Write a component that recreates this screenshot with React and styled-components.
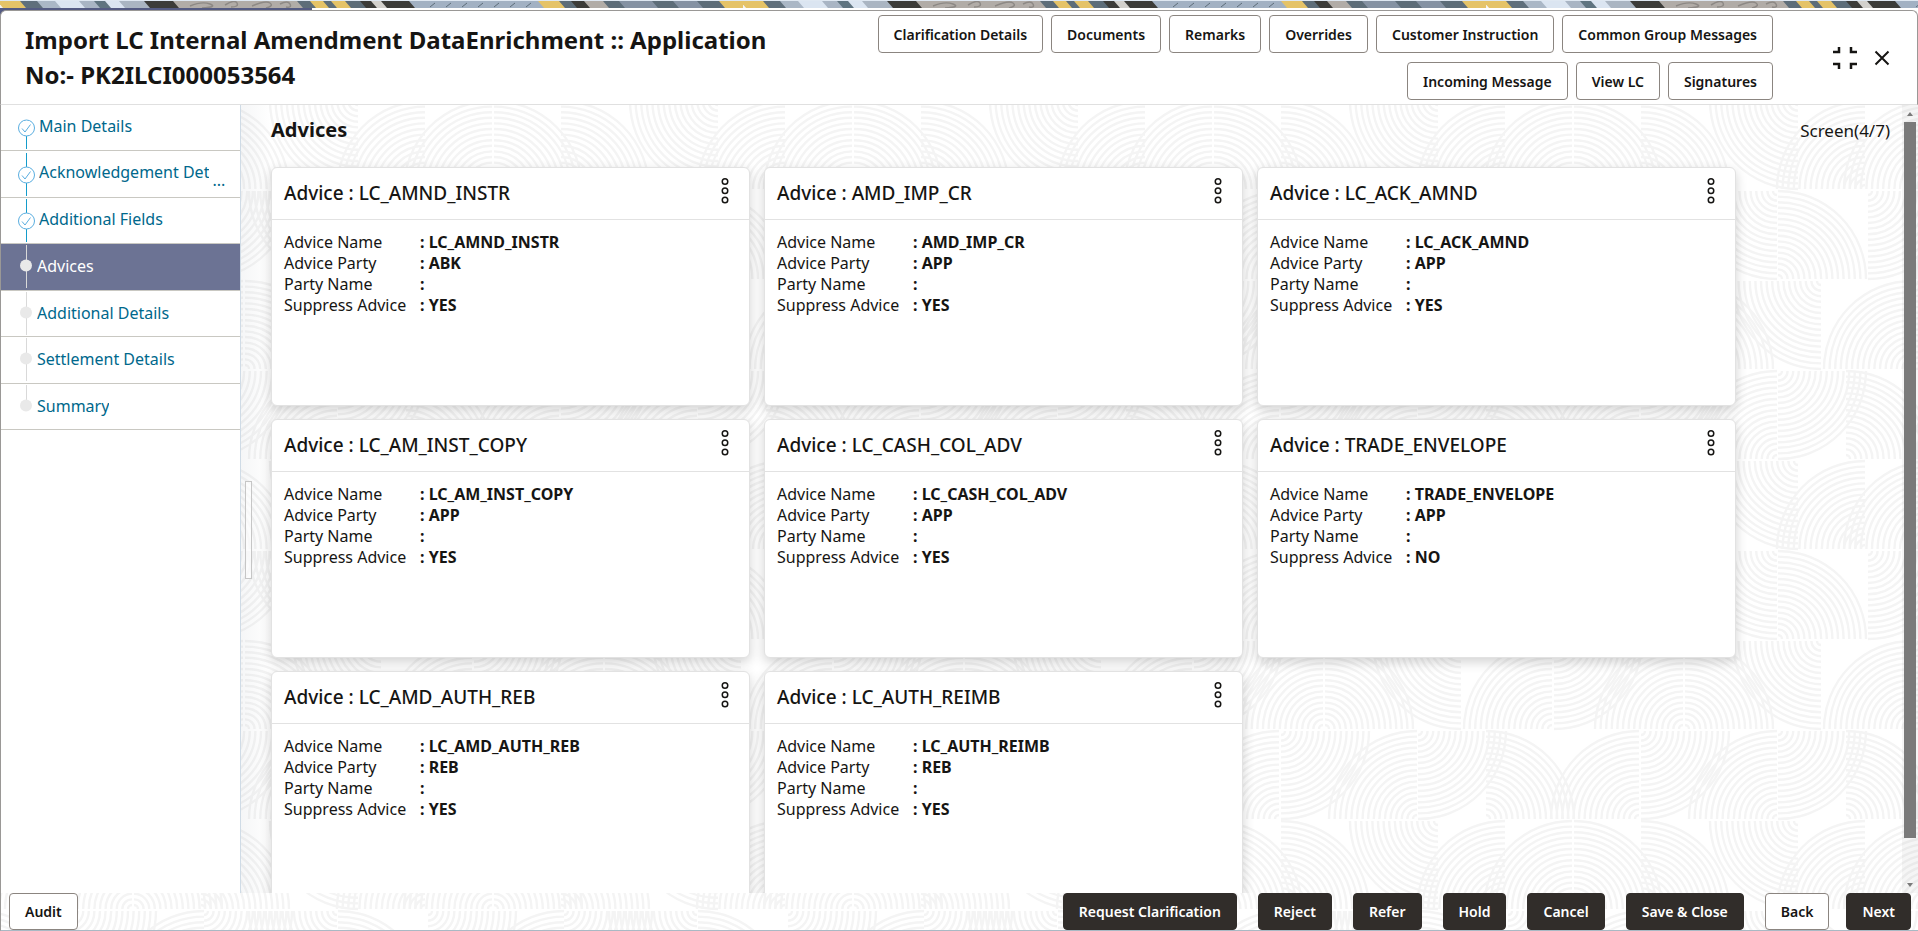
import React from 'react';
import styled, { createGlobalStyle, css } from 'styled-components';

// Vector backgrounds
const svgUrl = (svg) => `url("data:image/svg+xml,${encodeURIComponent(svg)}")`;

const TILE = 360;

// Quarter fans of the backdrop: centre x, centre y, horizontal and vertical direction
const fans = [
    [68, 191, 1, 1], [204, 279, -1, -1], [204, 191, 1, 1], [337, 191, -1, 1], [338, 279, 1, -1],
    [21, 281, -1, 1], [112, 369, -1, -1], [114, 281, 1, 1], [243, 369, -1, -1], [245, 369, 1, -1],
    [201, 11, 1, 1], [46, 99, 1, -1], [199, 99, -1, -1], [337, 99, -1, -1], [338, 11, 1, 1],
    [65, 189, -1, -1], [132, 189, -1, -1], [134, 189, 1, -1], [201, 189, 1, -1], [358, 101, -1, 1],
];

const fanPath = ([cx, cy, dx, dy]) => {
    let d = '';
    for (let i = 0; i < 16; i++) {
        const r = 4 + i * 5.6;
        const sweep = dx * dy > 0 ? 1 : 0;
        d += `M${cx + dx * r} ${cy}A${r} ${r} 0 0 ${sweep} ${cx} ${cy + dy * r}`;
    }
    return d;
};

const fanData = fans.map(fanPath).join('');

const backdrop = svgUrl(
    `<svg xmlns="http://www.w3.org/2000/svg" width="${TILE}" height="${TILE}" fill="none" stroke="#f4f4f4" stroke-width="2.400">` +
        [-TILE, 0, TILE]
            .map((x) => [-TILE, 0].map((y) => `<path transform="translate(${x} ${y})" d="${fanData}"/>`).join(''))
            .join('') +
        '</svg>'
);

// Colour patches of the banner strip: start x, colour
const patches = [
    [0, '#e5c368'], [23, '#5f6f7c'], [40, '#aab7c6'], [58, '#dbe5f1'], [82, '#a9b5c4'], [97, '#5f7480'],
    [108, '#dbe5f1'], [122, '#aab5c2'], [147, '#3c3c39'], [176, '#b1aca7'], [300, '#5d6d79'], [313, '#e5c368'],
    [326, '#5d6d79'], [334, '#e5c368'], [348, '#5d6d79'], [363, '#3c3c39'], [374, '#d3d1cd'], [384, '#3c3c39'],
    [412, '#a2b1c3'], [541, '#e5c368'], [562, '#5d6d79'], [574, '#3c3c39'], [587, '#b1aca7'], [606, '#5d6d79'],
    [622, '#8592a3'], [655, '#5d6d79'], [676, '#8592a3'], [700, '#5d6d79'], [722, '#e5c368'],
];

const banner = svgUrl(
    '<svg xmlns="http://www.w3.org/2000/svg" width="743" height="7">' +
        patches
            .map(([x, color], i) => {
                const end = i + 1 < patches.length ? patches[i + 1][0] : 743;
                return `<path fill="${color}" d="M${x - 3} 0H${end + 3}L${end + 9} 7H${x + 3}Z"/>`;
            })
            .join('') +
        '<path fill="none" stroke="#8d8985" stroke-width="1.500" d="M190 5q12-5 20-2t-8 4M225 4q10-6 12-2t-6 4M252 5q14-6 18-3t-4 5M280 3q8-4 10 0t-4 3"/>' +
        '<path stroke="#5d6d79" stroke-width="1" d="M430 6l5-4M446 6l5-4M462 6l5-4M478 6l5-4M494 6l5-4M510 6l5-4M526 6l5-4"/>' +
        '</svg>'
);

const GlobalStyle = createGlobalStyle`
    * {
        box-sizing: border-box;
    }

    body {
        margin: 0;
        color: #161513;
        font-family: 'Noto Sans', 'Open Sans', sans-serif;
        font-size: 16px;
        line-height: 21px;
        overflow: hidden;
    }
`;

// Page frame
const Page = styled.div`
    height: 100vh;
    display: flex;
    flex-direction: column;
    background: #fff ${backdrop};
`;

const Banner = styled.div`
    height: 8px;
    flex: none;
    border-top: 1px solid #dfe8f2;
    background: ${banner} repeat-x;
`;

const Dialog = styled.div`
    flex: 1;
    min-height: 0;
    display: flex;
    flex-direction: column;
    padding-top: 2px;
    background: linear-gradient(90deg, #545b83 312px, #fff 312px) 0 0 / 100% 8px no-repeat;
`;

const Header = styled.header`
    flex: none;
    min-height: 95px;
    display: flex;
    justify-content: space-between;
    padding: 4px 27px 4px 24px;
    background: #fff;
    border: 1px solid #9a9896;
    border-bottom-color: #e0e0e0;
    border-radius: 6px 6px 0 0;
`;

const Title = styled.h1`
    flex: 0 1 770px;
    margin: 0;
    padding-top: 7px;
    font-size: 24px;
    font-weight: 700;
    line-height: 35px;
`;

const HeaderSide = styled.div`
    display: flex;
    align-items: flex-start;
`;

const ActionList = styled.div`
    max-width: 940px;
    display: flex;
    flex-wrap: wrap;
    justify-content: flex-end;
    gap: 9px 8px;
    margin-right: 59px;
`;

const WindowTools = styled.div`
    display: flex;
    align-items: center;
    gap: 16px;
    padding-top: 31px;
`;

const Button = styled.button`
    height: ${({ $tall }) => ($tall ? 38 : 37)}px;
    padding: 0 15px;
    border: 1px solid ${({ $dark }) => ($dark ? '#312d2a' : '#8b8580')};
    border-radius: 4px;
    background: ${({ $dark }) => ($dark ? '#312d2a' : '#fff')};
    color: ${({ $dark }) => ($dark ? '#fff' : '#161513')};
    font-family: inherit;
    font-size: 14px;
    font-weight: 600;
    white-space: nowrap;
    cursor: pointer;
`;

const IconButton = styled.button`
    display: flex;
    padding: 0;
    border: 0;
    background: none;
    color: #161513;
    cursor: pointer;
`;

// Middle part: steps on the left, cards on the right
const Main = styled.div`
    flex: 1;
    min-height: 0;
    display: flex;
`;

const Sidebar = styled.nav`
    flex: none;
    width: 241px;
    background: #fff;
    border-left: 1px solid #9a9896;
    border-right: 1px solid #cfdbe6;
`;

const StepList = styled.ol`
    height: 325px;
    display: flex;
    flex-direction: column;
    margin: 0;
    padding: 0;
    list-style: none;
`;

const Step = styled.li`
    flex: 1;
    min-height: 0;
    border-bottom: 1px solid #c9c8c2;
    background: ${({ $active }) => ($active ? '#6c7394' : '#fff')};
`;

const StepLink = styled.a`
    height: 100%;
    display: flex;
    align-items: center;
    gap: ${({ $done }) => ($done ? 3 : 1)}px;
    padding-left: 15px;
    color: ${({ $active }) => ($active ? '#fff' : '#00688c')};
    text-decoration: none;
`;

const StepLabel = styled.span`
    max-width: 173px;
    overflow: hidden;
    white-space: nowrap;
    ${({ $done }) =>
        $done &&
        css`
            padding-bottom: 3px;
        `}
`;

const Ellipsis = styled.span`
    align-self: flex-end;
    padding-bottom: 6px;
`;

const Divider = styled.div`
    flex: none;
    width: 30px;
    padding: 376px 0 0 4px;
    background: linear-gradient(90deg, rgba(90, 105, 120, 0.06), rgba(90, 105, 120, 0));
`;

const Handle = styled.div`
    width: 7px;
    height: 98px;
    border: 1px solid #c6c6c6;
    background: rgba(255, 255, 255, 0.6);
`;

const Content = styled.main`
    flex: 1;
    min-width: 0;
    overflow: hidden;
    margin-left: -30px;
    padding: 10px 12px 0 30px;
`;

const ContentHead = styled.div`
    display: flex;
    justify-content: space-between;
    align-items: baseline;
    margin-bottom: 21px;
    line-height: 30px;
`;

const Heading = styled.h2`
    margin: 0;
    font-size: 20px;
    font-weight: 700;
`;

const ScreenCount = styled.span`
    font-size: 17px;
`;

const CardGrid = styled.div`
    max-width: 1465px;
    display: grid;
    grid-template-columns: repeat(3, 1fr);
    gap: 13px 14px;
`;

const Card = styled.section`
    height: 239px;
    background: #fff;
    border: 1px solid #e2e2e2;
    border-radius: 6px;
    box-shadow: 0 4px 12px rgba(0, 0, 0, 0.18);
`;

const CardHead = styled.div`
    height: 52px;
    display: flex;
    justify-content: space-between;
    align-items: flex-start;
    padding: 10px 20px 0 12px;
    border-bottom: 1px solid #e2e2e2;
`;

const CardTitle = styled.h3`
    margin: 0;
    font-size: 19px;
    font-weight: 500;
    line-height: 30px;
`;

const Fields = styled.dl`
    display: grid;
    grid-template-columns: 136px 1fr;
    margin: 0;
    padding: 12px;
`;

const FieldName = styled.dt``;

const FieldValue = styled.dd`
    margin: 0;
    font-weight: 700;
`;

// Scroll bar beside the cards
const Track = styled.div`
    flex: none;
    width: 16px;
    display: flex;
    flex-direction: column;
    align-items: center;
    background: rgba(0, 0, 0, 0.04);
`;

const Arrow = styled.svg`
    flex: none;
    width: 16px;
    height: 17px;
    fill: #7a7a7a;
`;

const ThumbArea = styled.div`
    flex: 1;
    width: 12px;
`;

const Thumb = styled.div`
    height: 95%;
    background: #7a7a7a;
`;

const Footer = styled.footer`
    flex: none;
    display: flex;
    justify-content: space-between;
    padding: 0 7px 0 8px;
    border-left: 1px solid #9a9896;
    border-bottom: 1px solid #a9b9c4;
`;

const FooterGroup = styled.div`
    display: flex;
    gap: ${({ $gap }) => $gap}px;
`;

const actions = [
    'Clarification Details',
    'Documents',
    'Remarks',
    'Overrides',
    'Customer Instruction',
    'Common Group Messages',
    'Incoming Message',
    'View LC',
    'Signatures',
];

const steps = [
    { label: 'Main Details', done: true },
    { label: 'Acknowledgement Details', done: true, cut: true },
    { label: 'Additional Fields', done: true },
    { label: 'Advices', active: true },
    { label: 'Additional Details' },
    { label: 'Settlement Details' },
    { label: 'Summary' },
];

const advices = [
    { name: 'LC_AMND_INSTR', party: 'ABK', suppress: 'YES' },
    { name: 'AMD_IMP_CR', party: 'APP', suppress: 'YES' },
    { name: 'LC_ACK_AMND', party: 'APP', suppress: 'YES' },
    { name: 'LC_AM_INST_COPY', party: 'APP', suppress: 'YES' },
    { name: 'LC_CASH_COL_ADV', party: 'APP', suppress: 'YES' },
    { name: 'TRADE_ENVELOPE', party: 'APP', suppress: 'NO' },
    { name: 'LC_AMD_AUTH_REB', party: 'REB', suppress: 'YES' },
    { name: 'LC_AUTH_REIMB', party: 'REB', suppress: 'YES' },
];

const footerActions = ['Request Clarification', 'Reject', 'Refer', 'Hold', 'Cancel', 'Save & Close'];

function StepMarker({ done, first, last }) {
    const lineTop = first ? 23 : 1;
    const lineBottom = last ? 22 : 44;
    if (done) {
        return (
            <svg width="20" height="45" viewBox="0 0 20 45" fill="none" aria-hidden="true">
                <path d={`M10.5 ${lineTop}V${lineBottom}`} stroke="#149ccb" />
                <circle cx="10.5" cy="23" r="8" fill="#fff" stroke="#5aaee0" />
                <path d="M6 23.5l3 3.5 5.500-7.500" stroke="#5aaee0" />
            </svg>
        );
    }
    return (
        <svg width="20" height="45" viewBox="0 0 20 45" fill="none" aria-hidden="true">
            <path d={`M10.5 ${lineTop}V${lineBottom}`} stroke="#d9d9d9" />
            <circle cx="10" cy="21.500" r="6" fill="#e9e9e9" />
        </svg>
    );
}

function AdviceCard({ advice }) {
    return (
        <Card>
            <CardHead>
                <CardTitle>Advice : {advice.name}</CardTitle>
                <IconButton aria-label="Card menu">
                    <svg width="8" height="26" viewBox="0 0 8 26" fill="none" stroke="currentColor" strokeWidth="1.500">
                        <circle cx="4" cy="3.500" r="2.750" />
                        <circle cx="4" cy="12.750" r="2.750" />
                        <circle cx="4" cy="22" r="2.750" />
                    </svg>
                </IconButton>
            </CardHead>
            <Fields>
                <FieldName>Advice Name</FieldName>
                <FieldValue>: {advice.name}</FieldValue>
                <FieldName>Advice Party</FieldName>
                <FieldValue>: {advice.party}</FieldValue>
                <FieldName>Party Name</FieldName>
                <FieldValue>:</FieldValue>
                <FieldName>Suppress Advice</FieldName>
                <FieldValue>: {advice.suppress}</FieldValue>
            </Fields>
        </Card>
    );
}

function App() {
    return (
        <Page>
            <GlobalStyle />
            <Banner />
            <Dialog>
                <Header>
                    <Title>Import LC Internal Amendment DataEnrichment :: Application No:- PK2ILCI000053564</Title>
                    <HeaderSide>
                        <ActionList>
                            {actions.map((action) => (
                                <Button key={action} $tall>{action}</Button>
                            ))}
                        </ActionList>
                        <WindowTools>
                            <IconButton aria-label="Collapse">
                                <svg width="26" height="24" viewBox="0 0 26 24" fill="none" stroke="currentColor" strokeWidth="2.500">
                                    <path d="M1 6h6V1M25 6h-6V1M1 18h6v5M25 18h-6v5" />
                                </svg>
                            </IconButton>
                            <IconButton aria-label="Close">
                                <svg width="16" height="16" viewBox="0 0 16 16" fill="none" stroke="currentColor" strokeWidth="2">
                                    <path d="M1.500 1.500l13 13M14.500 1.500l-13 13" />
                                </svg>
                            </IconButton>
                        </WindowTools>
                    </HeaderSide>
                </Header>

                <Main>
                    <Sidebar>
                        <StepList>
                            {steps.map((step, index) => (
                                <Step key={step.label} $active={step.active}>
                                    <StepLink href="#" $active={step.active} $done={step.done}>
                                        <StepMarker
                                            done={step.done}
                                            first={index === 0}
                                            last={index === steps.length - 1}
                                        />
                                        <StepLabel $done={step.done}>
                                            {step.cut ? 'Acknowledgement Det' : step.label}
                                        </StepLabel>
                                        {step.cut && <Ellipsis>...</Ellipsis>}
                                    </StepLink>
                                </Step>
                            ))}
                        </StepList>
                    </Sidebar>
                    <Divider>
                        <Handle />
                    </Divider>
                    <Content>
                        <ContentHead>
                            <Heading>Advices</Heading>
                            <ScreenCount>Screen(4/7)</ScreenCount>
                        </ContentHead>
                        <CardGrid>
                            {advices.map((advice) => (
                                <AdviceCard key={advice.name} advice={advice} />
                            ))}
                        </CardGrid>
                    </Content>
                    <Track aria-hidden="true">
                        <Arrow viewBox="0 0 16 17"><path d="M5 11l3-4 3 4z" /></Arrow>
                        <ThumbArea>
                            <Thumb />
                        </ThumbArea>
                        <Arrow viewBox="0 0 16 17"><path d="M5 7l3 4 3-4z" /></Arrow>
                    </Track>
                </Main>

                <Footer>
                    <Button>Audit</Button>
                    <FooterGroup $gap={21}>
                        {footerActions.map((action) => (
                            <Button key={action} $dark>{action}</Button>
                        ))}
                        <FooterGroup $gap={17}>
                            <Button>Back</Button>
                            <Button $dark>Next</Button>
                        </FooterGroup>
                    </FooterGroup>
                </Footer>
            </Dialog>
        </Page>
    );
}

export default App;
